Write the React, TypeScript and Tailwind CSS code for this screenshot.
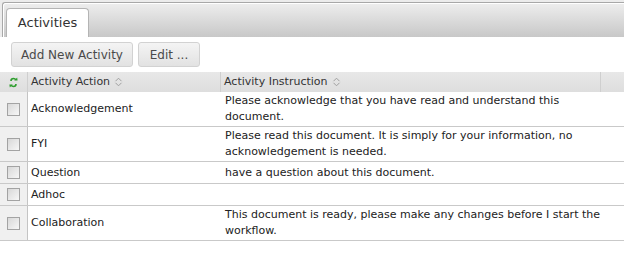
import React from 'react'

interface Activity {
  action: string
  instruction: string[]
}

// Instruction text kept in the same line breaks as the grid shows
const activities: Activity[] = [
  { action: 'Acknowledgement', instruction: ['Please acknowledge that you have read and understand this', 'document.'] },
  { action: 'FYI', instruction: ['Please read this document. It is simply for your information, no', 'acknowledgement is needed.'] },
  { action: 'Question', instruction: ['have a question about this document.'] },
  { action: 'Adhoc', instruction: [] },
  { action: 'Collaboration', instruction: ['This document is ready, please make any changes before I start the', 'workflow.'] },
]

/** Up/down sort indicator shown beside sortable headers */
function SortIcon() {
  return (
    <svg width="9" height="10" viewBox="0 0 9 10" className="ml-[4px] shrink-0">
      <path d="M1.5 4.2 L4.5 1.2 L7.5 4.2 M1.5 5.8 L4.5 8.8 L7.5 5.8" fill="none" stroke="#a0a0a0" strokeWidth="1" />
    </svg>
  )
}

/** Small green refresh glyph in the select column header */
function RefreshIcon() {
  return (
    <svg width="9" height="11" viewBox="0 0 9 11">
      <path d="M2 4 C2 2.4 3.2 1.5 4.5 1.5 C5.6 1.5 6.4 2 6.8 2.8" fill="none" stroke="#2f9e2f" strokeWidth="1.6" />
      <path d="M5.2 3.6 L8.6 3.6 L8.2 0.4 Z" fill="#2f9e2f" />
      <path d="M7 7 C7 8.6 5.8 9.5 4.5 9.5 C3.4 9.5 2.6 9 2.2 8.2" fill="none" stroke="#2f9e2f" strokeWidth="1.6" />
      <path d="M3.8 7.4 L0.4 7.4 L0.8 10.6 Z" fill="#2f9e2f" />
    </svg>
  )
}

function Checkbox() {
  return <div className="w-[13px] h-[13px] border border-[#a3a3a3] bg-gradient-to-br from-[#d8d8d8] to-[#f7f7f7]" />
}

function ToolButton({ label, width }: { label: string; width: string }) {
  return (
    <button
      className={`${width} h-[25px] flex items-center justify-center rounded-[3px] border border-[#d2d2d2] bg-gradient-to-b from-[#f4f4f4] to-[#e2e2e2] text-[12px] text-[#4a4a4a]`}
    >
      {label}
    </button>
  )
}

export default function App() {
  return (
    <div className="w-[624px] h-[259px] bg-white font-['DejaVu_Sans','Verdana',sans-serif] text-[11px] text-[#222] overflow-hidden">
      {/* Tab strip */}
      <div className="h-[37px] pt-[2px] bg-[#ececec]">
        <div className="h-[35px] ml-[2px] border-t border-l border-[#a8a8a8] rounded-tl-[3px] bg-gradient-to-b from-[#eeeeee] to-[#c8c8c8] shadow-[inset_1px_1px_0_#ffffff] flex items-end pl-[3px]">
          <div className="w-[83px] h-[29px] bg-white border border-b-0 border-[#b4b4b4] rounded-t-[4px] flex items-center justify-center text-[13px] text-[#333]">
            Activities
          </div>
        </div>
      </div>

      {/* Toolbar */}
      <div className="flex gap-[5px] pl-[11px] mt-[5px]">
        <ToolButton label="Add New Activity" width="w-[122px]" />
        <ToolButton label="Edit ..." width="w-[62px]" />
      </div>

      {/* Grid */}
      <div className="mt-[5px]">
        <div className="flex h-[20px] bg-gradient-to-b from-[#e8e8e8] to-[#dedede] text-[#333]">
          <div className="w-[28px] flex items-center justify-center border-r border-[#cfcfcf]">
            <RefreshIcon />
          </div>
          <div className="w-[193px] flex items-center pl-[3px] border-r border-[#cfcfcf]">
            Activity Action
            <SortIcon />
          </div>
          <div className="w-[380px] flex items-center pl-[3px] border-r border-[#cfcfcf]">
            Activity Instruction
            <SortIcon />
          </div>
          <div className="flex-1" />
        </div>

        {activities.map((row) => (
          <div key={row.action} className="flex border-b border-[#c9c9c9]">
            <div className="w-[28px] shrink-0 flex items-center justify-center bg-[#f0f0f0] border-r border-[#c4c4c4] min-h-[21px]">
              <Checkbox />
            </div>
            <div className="w-[193px] shrink-0 flex items-center pl-[3px] leading-4 py-px">{row.action}</div>
            <div className="w-[380px] shrink-0 flex flex-col justify-center pl-[4px] leading-4 py-px">
              {row.instruction.map((line) => (
                <span key={line} className="whitespace-nowrap">
                  {line}
                </span>
              ))}
            </div>
            <div className="flex-1" />
          </div>
        ))}
      </div>
    </div>
  )
}
